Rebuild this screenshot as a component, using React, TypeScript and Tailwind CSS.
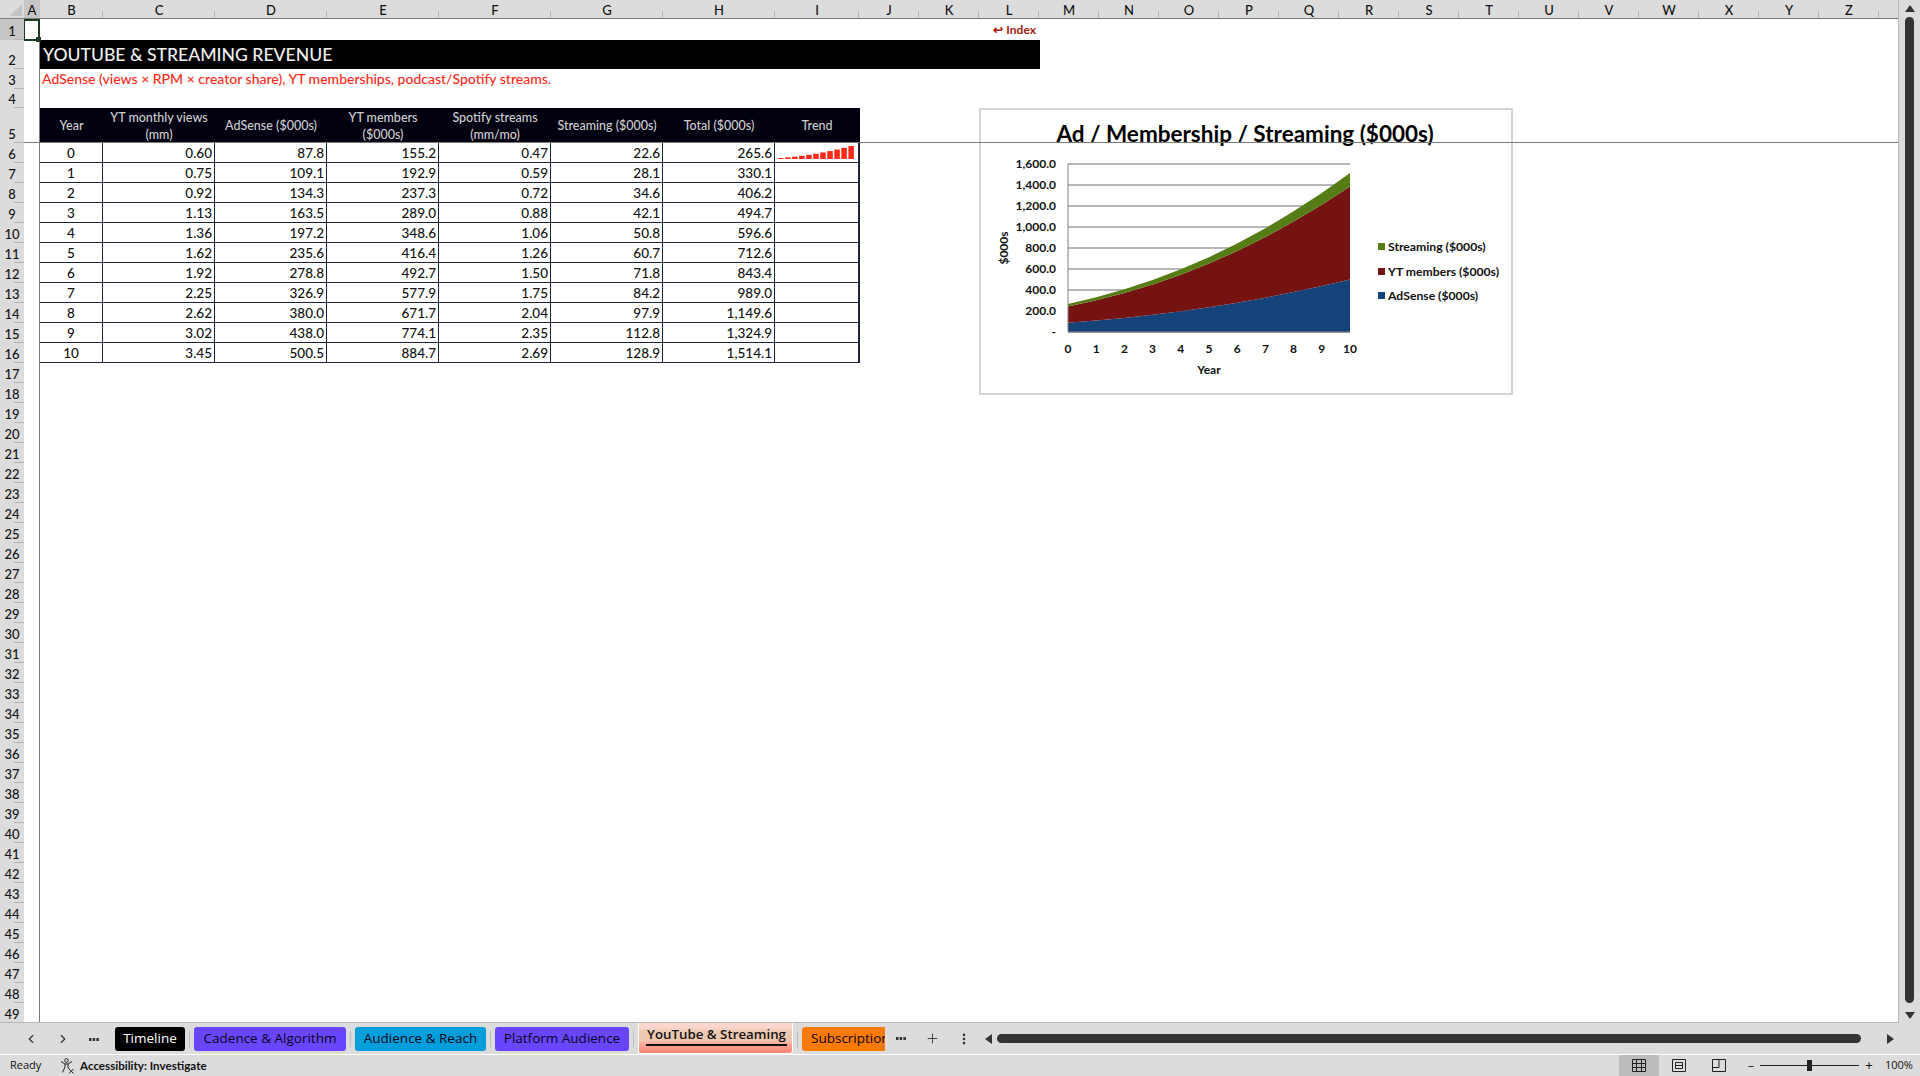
import React from 'react';
import { ChevronLeft, ChevronRight, EllipsisVertical, Plus } from 'lucide-react';

const rows = [
  ['0', '0.60', '87.8', '155.2', '0.47', '22.6', '265.6'],
  ['1', '0.75', '109.1', '192.9', '0.59', '28.1', '330.1'],
  ['2', '0.92', '134.3', '237.3', '0.72', '34.6', '406.2'],
  ['3', '1.13', '163.5', '289.0', '0.88', '42.1', '494.7'],
  ['4', '1.36', '197.2', '348.6', '1.06', '50.8', '596.6'],
  ['5', '1.62', '235.6', '416.4', '1.26', '60.7', '712.6'],
  ['6', '1.92', '278.8', '492.7', '1.50', '71.8', '843.4'],
  ['7', '2.25', '326.9', '577.9', '1.75', '84.2', '989.0'],
  ['8', '2.62', '380.0', '671.7', '2.04', '97.9', '1,149.6'],
  ['9', '3.02', '438.0', '774.1', '2.35', '112.8', '1,324.9'],
  ['10', '3.45', '500.5', '884.7', '2.69', '128.9', '1,514.1'],
];

const adsense = rows.map((r) => parseFloat(r[2]));
const members = rows.map((r) => parseFloat(r[3]));
const streaming = rows.map((r) => parseFloat(r[5]));
const totals = rows.map((r) => parseFloat(r[6].replace(',', '')));

const columns = [
  { name: 'B', cls: 'w-[63px]' },
  { name: 'C', cls: 'w-[112px]' },
  { name: 'D', cls: 'w-[112px]' },
  { name: 'E', cls: 'w-[112px]' },
  { name: 'F', cls: 'w-[112px]' },
  { name: 'G', cls: 'w-[112px]' },
  { name: 'H', cls: 'w-[112px]' },
  { name: 'I', cls: 'w-[84px]' },
  ...'JKLMNOPQRSTUVWXYZ'.split('').map((name) => ({ name, cls: 'w-[60px]' })),
];

const headers = [
  { label: ['Year'], cls: 'w-[63px]' },
  { label: ['YT monthly views', '(mm)'], cls: 'w-[112px]' },
  { label: ['AdSense ($000s)'], cls: 'w-[112px]' },
  { label: ['YT members', '($000s)'], cls: 'w-[112px]' },
  { label: ['Spotify streams', '(mm/mo)'], cls: 'w-[112px]' },
  { label: ['Streaming ($000s)'], cls: 'w-[112px]' },
  { label: ['Total ($000s)'], cls: 'w-[112px]' },
  { label: ['Trend'], cls: 'w-[84px]' },
];

const rowHeaders = [
  { n: 1, cls: 'h-[21px] bg-[#c6c6c6]' },
  { n: 2, cls: 'h-[29px]' },
  { n: 3, cls: 'h-5' },
  { n: 4, cls: 'h-[19px]' },
  { n: 5, cls: 'h-[35px]' },
  ...Array.from({ length: 44 }, (_, i) => ({ n: i + 6, cls: 'h-5' })),
];

const tabs = [
  { label: 'Timeline', cls: 'w-[70px] bg-black text-white' },
  { label: 'Cadence & Algorithm', cls: 'w-[152px] bg-[#6a45ff] text-[#06061a]' },
  { label: 'Audience & Reach', cls: 'w-[131px] bg-[#009fdc] text-[#06061a]' },
  { label: 'Platform Audience', cls: 'w-[134px] bg-[#6a45ff] text-[#06061a]' },
];

const X0 = 89;
const X_STEP = 28.2;
const Y0 = 224;
const Y_SCALE = 168 / 1600;

const band = (lower: number[], upper: number[]) => {
  const top = upper.map((v, i) => `${X0 + i * X_STEP},${Y0 - v * Y_SCALE}`);
  const bottom = lower.map((v, i) => `${X0 + i * X_STEP},${Y0 - v * Y_SCALE}`).reverse();
  return [...top, ...bottom].join(' ');
};

const zeros = adsense.map(() => 0);
const stack2 = adsense.map((v, i) => v + members[i]);
const stack3 = stack2.map((v, i) => v + streaming[i]);

const Chart = () => (
  <div className="absolute left-[955px] top-[89px] h-[287px] w-[534px] border-2 border-[#d4d4d4] bg-white">
    <svg width="530" height="283" viewBox="2 2 530 283" className="block font-[Lato,sans-serif]">
      <text x="266" y="34" textAnchor="middle" className="fill-black text-[22.5px] font-bold">
        Ad / Membership / Streaming ($000s)
      </text>
      {[0, 1, 2, 3, 4, 5, 6, 7, 8].map((i) => (
        <g key={i}>
          <line x1={X0} x2="371" y1={Y0 - i * 21} y2={Y0 - i * 21} stroke="#707070" />
          <text x="77" y={Y0 - i * 21 + 4} textAnchor="end" className="fill-[#111] text-[12px] font-bold">
            {i === 0 ? '-' : (i * 200).toLocaleString('en-US') + '.0'}
          </text>
        </g>
      ))}
      <polygon points={band(zeros, adsense)} fill="#14437a" />
      <polygon points={band(adsense, stack2)} fill="#751313" />
      <polygon points={band(stack2, stack3)} fill="#567d15" />
      <line x1={X0} x2={X0} y1="56" y2={Y0} stroke="#808080" />
      <line x1={X0} x2="371" y1={Y0} y2={Y0} stroke="#808080" />
      {rows.map((r, i) => (
        <text key={r[0]} x={X0 + i * X_STEP} y="245" textAnchor="middle" className="fill-[#111] text-[12px] font-bold">
          {r[0]}
        </text>
      ))}
      <text x="230" y="266" textAnchor="middle" className="fill-[#111] text-[12px] font-bold">
        Year
      </text>
      <text transform="translate(29 140) rotate(-90)" textAnchor="middle" className="fill-[#111] text-[12px] font-bold">
        $000s
      </text>
      <rect x="399" y="135" width="7" height="7" fill="#567d15" />
      <text x="409" y="143" className="fill-[#111] text-[12.2px] font-bold">Streaming ($000s)</text>
      <rect x="399" y="160" width="7" height="7" fill="#751313" />
      <text x="409" y="168" className="fill-[#111] text-[12.2px] font-bold">YT members ($000s)</text>
      <rect x="399" y="184" width="7" height="7" fill="#14437a" />
      <text x="409" y="192" className="fill-[#111] text-[12.2px] font-bold">AdSense ($000s)</text>
    </svg>
  </div>
);

const Spark = () => {
  const min = Math.min(...totals);
  const max = Math.max(...totals);
  return (
    <svg width="82" height="19" className="block">
      {totals.map((v, i) => {
        const h = 1 + (12 * (v - min)) / (max - min);
        return <rect key={i} x={3 + i * 7.04} y={16 - h} width="5.5" height={h} fill="#ff2a17" />;
      })}
    </svg>
  );
};

const AccessIcon = () => (
  <svg width="15" height="16" viewBox="0 0 15 16" fill="none" stroke="#222" strokeWidth="1">
    <circle cx="6.5" cy="2.5" r="1.8" />
    <path d="M1 3.5l4 2.5h3l4-2.500M5 6v3l-2.500 5.500M8 6v3l1 2" />
    <path d="M9 11l4.500 4.500M13.500 11L9 15.500" />
  </svg>
);

export default function App() {
  return (
    <div className="flex h-[1076px] w-[1920px] flex-col overflow-hidden bg-[#dcdcdc] font-[Lato,sans-serif] text-[#111]">
      <div className="flex h-[1023px] flex-none">
        <div className="flex w-[1898px] flex-col border-b border-[#b8b8b8]">
          {/* column letters */}
          <div className="flex h-[19px] flex-none border-b border-[#7a7a7a] text-[13px] font-medium leading-5">
            <div className="relative w-6">
              <svg width="12" height="12" className="absolute bottom-[2px] right-[2px]">
                <polygon points="12,0 12,12 0,12" fill="#c4c4c4" />
              </svg>
            </div>
            <div className="w-4 bg-[#c6c6c6] text-center">A</div>
            {columns.map((c) => (
              <div key={c.name} className={`${c.cls} relative text-center`}>
                {c.name}
                <div className="absolute bottom-0 right-0 h-[7px] w-px bg-[#b4b4b4]" />
              </div>
            ))}
          </div>

          <div className="flex min-h-0 flex-1">
            {/* row numbers */}
            <div className="w-6 flex-none overflow-hidden text-[13px] font-medium leading-[15px]">
              {rowHeaders.map((r) => (
                <div key={r.n} className={`${r.cls} relative flex items-end justify-center pb-[1px]`}>
                  {r.n}
                  <div className="absolute bottom-0 right-0 h-px w-[10px] bg-[#b4b4b4]" />
                </div>
              ))}
            </div>

            <div className="relative min-w-0 flex-1 overflow-hidden bg-white">
              {/* rows 1-5 */}
              <div className="flex h-[124px]">
                <div className="w-4 flex-none border-r border-[#7a7a7a]" />
                <div className="flex-1">
                  <div className="flex h-[21px] w-[1000px] items-center justify-end pr-1 text-[12px] font-bold text-[#a5200f]">
                    <span className="mr-[3px] text-[12px]">↩</span>Index
                  </div>
                  <div className="flex h-[29px] w-[1000px] items-center bg-black pl-[3px] pt-[2px] text-[17.6px] font-medium text-[#f0f0f0]">
                    YOUTUBE &amp; STREAMING REVENUE
                  </div>
                  <div className="flex h-[19px] items-center pl-[2px] text-[14px] font-medium text-[#ff2a17]">
                    AdSense (views × RPM × creator share), YT memberships, podcast/Spotify streams.
                  </div>
                  <div className="h-5" />
                  <div className="flex h-[35px] w-[820px] bg-[#00000f] text-[12.5px] font-medium leading-[17px] text-[#cfcfcf]">
                    {headers.map((h) => (
                      <div key={h.label[0]} className={`${h.cls} flex flex-col items-center justify-center`}>
                        {h.label.map((l) => (
                          <div key={l}>{l}</div>
                        ))}
                      </div>
                    ))}
                  </div>
                </div>
              </div>

              {/* rows 6-16 */}
              <div className="flex h-[880px]">
                <div className="w-4 flex-none border-r border-[#7a7a7a]" />
                <div className="flex-1">
                  {rows.map((r, i) => (
                    <div
                      key={r[0]}
                      className="flex h-5 w-[820px] border-b border-r-2 border-[#1c2233] text-[13.5px] font-medium"
                    >
                      <div className="flex w-[63px] items-center justify-center border-r border-[#1c2233] pt-[2px]">{r[0]}</div>
                      {r.slice(1).map((v, j) => (
                        <div
                          key={j}
                          className="flex w-[112px] items-center justify-end border-r border-[#1c2233] pr-[2px] pt-[2px]"
                        >
                          {v}
                        </div>
                      ))}
                      <div className="flex-1">{i === 0 && <Spark />}</div>
                    </div>
                  ))}
                </div>
              </div>

              {/* frozen pane line */}
              <div className="absolute left-0 top-[123px] z-10 h-px w-full bg-[#7a7a7a]" />
              {/* selected cell */}
              <div className="absolute left-[-1px] top-0 z-20 h-[22px] w-[17px] border-2 border-[#1d3b24]">
                <div className="absolute bottom-[-3px] right-[-3px] h-[5px] w-[5px] bg-[#1d3b24]" />
              </div>
              <Chart />
            </div>
          </div>
        </div>

        {/* vertical scrollbar */}
        <div className="flex w-[22px] flex-none flex-col items-center border-l border-[#b8b8b8] pt-[5px]">
          <svg width="10" height="7" className="flex-none"><polygon points="5,0 10,7 0,7" fill="#333" /></svg>
          <div className="mt-[5px] w-[9px] flex-1 rounded-full bg-[#333]" />
          <svg width="10" height="7" className="mb-[4px] mt-[9px] flex-none"><polygon points="0,0 10,0 5,7" fill="#333" /></svg>
        </div>
      </div>

      {/* sheet tabs */}
      <div className="flex h-[31px] flex-none items-center font-[Open_Sans,sans-serif] text-[13.5px]">
        <div className="flex w-[115px] flex-none items-center text-[#333]">
          <ChevronLeft size={14} className="ml-6" />
          <ChevronRight size={14} className="ml-[18px]" />
          <svg width="10" height="4" className="ml-[19px]">
            <rect x="0" y="1" width="2.500" height="3" fill="#333" />
            <rect x="3.700" y="1" width="2.500" height="3" fill="#333" />
            <rect x="7.400" y="1" width="2.500" height="3" fill="#333" />
          </svg>
        </div>
        {tabs.map((t) => (
          <React.Fragment key={t.label}>
            <div className={`${t.cls} flex h-6 flex-none items-center justify-center rounded-[3px]`}>{t.label}</div>
            <div className="mx-1 h-4 w-px flex-none bg-[#bcbcbc]" />
          </React.Fragment>
        ))}
        <div className="flex h-[31px] w-[155px] flex-none flex-col items-center justify-start rounded-b-[3px] border-x border-b border-white bg-[linear-gradient(to_bottom,#fdd5cf_0%,#fdd5cf_14%,#ecc9b0_30%,#efc6ae_58%,#fba595_72%,#ff8573_100%)] pl-[2px] pt-[2px] text-[13.3px] font-semibold text-[#111]">
          <span className="border-b-2 border-[#111] px-[1px] leading-[19px]">YouTube &amp; Streaming</span>
        </div>
        <div className="mx-1 h-4 w-px flex-none bg-[#bcbcbc]" />
        <div className="flex h-6 w-[83px] flex-none items-center overflow-hidden whitespace-nowrap rounded-l-[3px] bg-[#ff7a00] pl-[9px] text-[#06061a]">
          Subscriptions
        </div>
        <svg width="10" height="4" className="ml-[11px] flex-none">
          <rect x="0" y="0" width="2.500" height="3" fill="#333" />
          <rect x="3.700" y="0" width="2.500" height="3" fill="#333" />
          <rect x="7.400" y="0" width="2.500" height="3" fill="#333" />
        </svg>
        <Plus size={15} strokeWidth={1.5} className="ml-[19px] flex-none text-[#333]" />
        <EllipsisVertical size={14} strokeWidth={2.5} className="ml-[17px] flex-none text-[#333]" />
        <svg width="7" height="10" className="ml-[14px] flex-none"><polygon points="7,0 7,10 0,5" fill="#333" /></svg>
        <div className="ml-[5px] h-[9px] w-[864px] flex-none rounded-full bg-[#333]" />
        <svg width="7" height="10" className="ml-[26px] flex-none"><polygon points="0,0 7,5 0,10" fill="#333" /></svg>
      </div>

      <div className="h-px flex-none bg-white" />

      {/* status bar */}
      <div className="flex h-[21px] flex-none items-center text-[12px]">
        <span className="ml-[10px] w-[50px] font-[Open_Sans,sans-serif] text-[11px]">Ready</span>
        <AccessIcon />
        <span className="ml-[5px] text-[11.6px] font-bold">Accessibility: Investigate</span>
        <div className="ml-auto flex h-full items-center">
          <div className="flex h-full w-10 items-center justify-center bg-[#bcbcbc]">
            <svg width="14" height="13" fill="none" stroke="#222">
              <path d="M.5.5h13v12H.5zM.5 4.500h13M.5 8.500h13M4.500.5v12M9.500.5v12" />
            </svg>
          </div>
          <div className="flex h-full w-10 items-center justify-center">
            <svg width="14" height="13" fill="none" stroke="#222">
              <path d="M.5.5h13v12H.5zM3.500 3.500h7v6h-7zM3.500 6.500h7" />
            </svg>
          </div>
          <div className="flex h-full w-10 items-center justify-center">
            <svg width="14" height="13" fill="none" stroke="#222">
              <path d="M.5.5h13v12H.5zM.5 8.500h6.500M7 .5v8" />
            </svg>
          </div>
          <span className="ml-2 w-[8px] text-center leading-none">−</span>
          <div className="relative ml-[5px] h-px w-[99px] bg-[#222]">
            <div className="absolute left-[47px] top-[-5px] h-[11px] w-[5px] bg-[#222]" />
          </div>
          <span className="ml-[5px] w-[10px] text-center text-[13px] leading-none">+</span>
          <span className="ml-[11px] w-[35px] font-[Open_Sans,sans-serif] text-[11px]">100%</span>
        </div>
      </div>
    </div>
  );
}
